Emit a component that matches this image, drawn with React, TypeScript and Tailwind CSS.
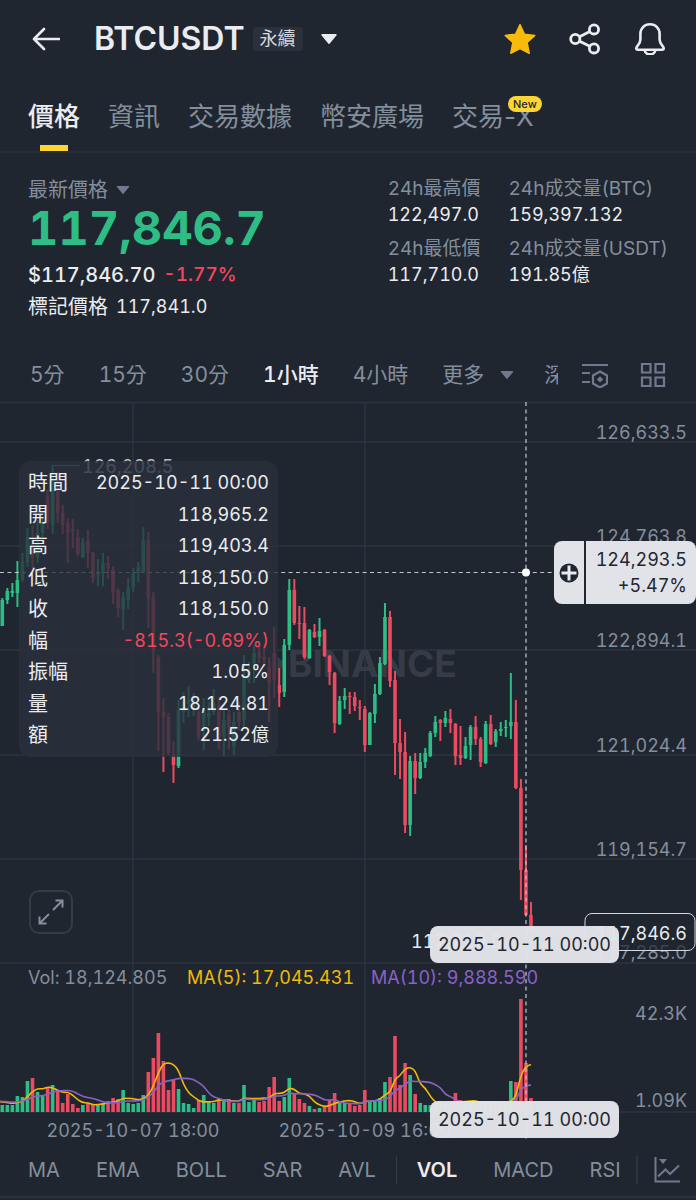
import { useState } from "react"

type Candle = [up: number, high: number, top: number, bottom: number, low: number, vol: number]

// [up, high, body top, body bottom, low, volume] in chart units
const CANDLES: Candle[] = [
  [1, 198, 200, 226, 226, 7], [1, 188, 191, 200, 204, 7], [1, 183, 191, 193, 197, 7],
  [1, 161, 180, 193, 207, 16], [1, 153, 162, 180, 182, 15], [1, 128, 137, 162, 167, 31],
  [0, 125, 138, 158, 168, 34], [1, 120, 133, 157, 163, 20], [1, 117, 123, 133, 137, 16],
  [0, 90, 97, 123, 129, 24], [1, 65, 90, 125, 134, 27], [0, 72, 90, 113, 123, 22],
  [0, 105, 113, 125, 134, 9], [0, 118, 123, 133, 163, 18], [0, 119, 129, 131, 148, 8],
  [0, 129, 137, 154, 156, 4], [1, 138, 142, 157, 158, 7], [0, 130, 141, 153, 168, 9],
  [0, 152, 153, 178, 183, 8], [1, 159, 172, 175, 186, 8], [1, 153, 163, 173, 186, 9],
  [0, 156, 163, 168, 179, 11], [0, 166, 170, 193, 204, 14], [0, 188, 190, 208, 217, 13],
  [1, 192, 197, 210, 230, 22], [1, 178, 187, 200, 209, 9], [1, 168, 173, 187, 192, 8],
  [1, 162, 167, 173, 182, 9], [1, 127, 140, 172, 173, 17], [0, 132, 140, 197, 228, 40],
  [0, 192, 197, 250, 273, 54], [0, 255, 258, 312, 351, 79], [0, 298, 312, 317, 372, 51],
  [0, 313, 317, 353, 355, 22], [0, 341, 355, 365, 383, 33], [1, 300, 310, 366, 368, 23],
  [1, 292, 302, 312, 323, 9], [1, 286, 300, 304, 317, 8], [1, 293, 300, 307, 316, 4],
  [0, 308, 313, 337, 340, 12], [1, 298, 310, 327, 350, 17], [1, 302, 313, 317, 326, 10],
  [1, 289, 303, 312, 315, 9], [0, 297, 305, 340, 349, 13], [1, 310, 320, 337, 356, 11],
  [0, 310, 315, 328, 349, 13], [1, 312, 322, 347, 355, 9], [0, 302, 312, 322, 330, 9],
  [1, 255, 277, 320, 328, 27], [1, 262, 270, 280, 283, 10], [1, 245, 253, 263, 283, 12],
  [0, 247, 252, 258, 263, 10], [0, 248, 257, 260, 267, 11], [0, 257, 267, 283, 322, 25],
  [0, 227, 253, 280, 298, 35], [0, 268, 285, 293, 307, 11], [1, 239, 245, 292, 297, 15],
  [1, 179, 190, 245, 250, 34], [0, 179, 190, 223, 225, 19], [0, 206, 223, 224, 239, 13],
  [0, 207, 223, 257, 259, 9], [1, 229, 230, 258, 259, 6], [0, 224, 232, 237, 238, 3],
  [1, 218, 231, 237, 246, 4], [0, 229, 230, 256, 257, 6], [0, 255, 256, 272, 285, 12],
  [0, 272, 273, 323, 333, 19], [1, 296, 301, 324, 325, 9], [1, 288, 296, 300, 309, 9],
  [0, 292, 296, 297, 314, 9], [0, 292, 297, 306, 311, 6], [0, 300, 307, 308, 320, 7],
  [0, 306, 309, 345, 352, 22], [1, 312, 313, 345, 345, 10], [1, 284, 294, 314, 323, 10],
  [1, 257, 263, 294, 295, 14], [1, 203, 217, 264, 265, 30], [0, 211, 217, 281, 287, 35],
  [0, 271, 280, 343, 375, 76], [0, 319, 343, 352, 379, 27], [0, 332, 352, 425, 433, 49],
  [1, 356, 361, 425, 436, 37], [0, 353, 361, 378, 394, 18], [1, 353, 362, 378, 379, 9],
  [1, 348, 353, 362, 368, 7], [1, 331, 333, 356, 357, 7], [1, 316, 322, 333, 337, 8],
  [0, 319, 320, 323, 341, 7], [1, 311, 318, 323, 327, 6], [0, 309, 319, 323, 333, 7],
  [0, 323, 324, 356, 365, 19], [0, 326, 355, 358, 365, 12], [1, 337, 346, 358, 359, 8],
  [1, 325, 327, 345, 360, 9], [0, 316, 327, 339, 345, 8], [0, 337, 339, 362, 367, 9],
  [1, 321, 324, 363, 364, 9], [0, 315, 324, 344, 345, 7], [1, 329, 331, 342, 347, 5],
  [1, 322, 329, 331, 336, 5], [1, 320, 327, 328, 337, 6], [1, 273, 322, 326, 339, 31],
  [0, 300, 322, 388, 389, 30], [0, 379, 388, 470, 500, 113], [0, 445, 470, 515, 516, 49],
  [0, 502, 515, 530, 532, 14],
]

const UP = "#2ebd85"
const DOWN = "#ec4a61"
const GRID = "#2d343f"
const VOL_BASE = 712
const xAt = (i: number) => 2.3 + i * 5.035

const PRICE_AXIS = [
  { y: 32, line: 42, label: "126,633.5" },
  { y: 136, line: 146, label: "124,763.8" },
  { y: 240, line: 250, label: "122,894.1" },
  { y: 345, line: 355, label: "121,024.4" },
  { y: 449, line: 459, label: "119,154.7" },
  { y: 552, line: 563, label: "117,285.0" },
]

const DETAILS = [
  ["時間", "2025-10-11 00:00"],
  ["開", "118,965.2"],
  ["高", "119,403.4"],
  ["低", "118,150.0"],
  ["收", "118,150.0"],
  ["幅", "-815.3(-0.69%)"],
  ["振幅", "1.05%"],
  ["量", "18,124.81"],
  ["額", "21.52億"],
]

const TABS = ["價格", "資訊", "交易數據", "幣安廣場", "交易-X"]
const INTERVALS = ["5分", "15分", "30分", "1小時", "4小時"]

function maPath(period: number) {
  const pts = CANDLES.map((_, i) => {
    let sum = 0
    for (let k = i - period + 1; k <= i; k++) sum += k < 0 ? 11 : CANDLES[k][5]
    return [xAt(i), VOL_BASE - sum / period]
  })
  let d = `M0 ${pts[0][1]}`
  for (let i = 0; i < pts.length - 1; i++) {
    const mx = (pts[i][0] + pts[i + 1][0]) / 2
    const my = (pts[i][1] + pts[i + 1][1]) / 2
    d += ` Q${pts[i][0]} ${pts[i][1]} ${mx} ${my}`
  }
  const last = pts[pts.length - 1]
  return `${d} L${last[0]} ${last[1]}`
}

function Caret({ className }: { className: string }) {
  return (
    <svg viewBox="0 0 16 10" className={className} fill="currentColor" aria-hidden="true">
      <path d="M1 0h14a.8.8 0 0 1 .6 1.3L8.8 9.5a1 1 0 0 1-1.6 0L.4 1.3A.8.8 0 0 1 1 0z" />
    </svg>
  )
}

function Header() {
  return (
    <header className="flex h-[78px] items-center pl-8 pr-[30px] text-[#eaecef]">
      <button aria-label="返回">
        <svg viewBox="0 0 28 24" className="h-6 w-7" fill="none" stroke="currentColor" strokeWidth="2.6" strokeLinecap="round" strokeLinejoin="round">
          <path d="M27 12H2M12 2 2 12l10 10" />
        </svg>
      </button>
      <h1 className="ml-[34px] text-[32px] font-semibold leading-9">BTCUSDT</h1>
      <span className="ml-2 rounded bg-[#2a313c] px-[7px] text-lg leading-6 text-[#d5d9df]">永續</span>
      <button className="ml-[18px]" aria-label="切換交易對">
        <Caret className="h-[10px] w-4" />
      </button>
      <div className="ml-auto flex items-center gap-[33px]">
        <button aria-label="收藏">
          <svg viewBox="0 0 32 32" className="size-8 text-[#f8bb0b]" fill="currentColor" stroke="currentColor" strokeWidth="1.4" strokeLinejoin="round">
            <path d="m16 1.5 4.4 9.6 10.4 1.3-7.6 7.2 2.1 10.7-9.3-4.7-9.3 4.7 2.1-10.7L1.2 12.4l10.4-1.3z" />
          </svg>
        </button>
        <button aria-label="分享">
          <svg viewBox="0 0 32 32" className="size-8" fill="none" stroke="currentColor" strokeWidth="2.8">
            <circle cx="6.3" cy="16" r="4.6" />
            <circle cx="25" cy="6.4" r="4.6" />
            <circle cx="25" cy="25.4" r="4.6" />
            <path d="m10.6 13.8 10.2-5.2M10.6 18.2l10.2 5.1" />
          </svg>
        </button>
        <button aria-label="通知">
          <svg viewBox="0 0 32 32" className="size-8" fill="none" stroke="currentColor" strokeWidth="2.6" strokeLinejoin="round">
            <path d="M16 1.3c-5.800 0-9.600 4.200-9.600 9.600v5.600c0 2.400-1 4.200-2.700 6.200-1.600 1.800-2.200 4 .2 4h24.200c2.400 0 1.800-2.200.2-4-1.700-2-2.700-3.800-2.700-6.200v-5.600c0-5.400-3.800-9.600-9.600-9.600z" />
            <path d="M10.600 27.200c.6 2.700 2.700 4.200 5.400 4.200s4.800-1.500 5.400-4.200" />
          </svg>
        </button>
      </div>
    </header>
  )
}

function Tabs() {
  const [active, setActive] = useState("價格")
  return (
    <nav className="flex h-[75px] items-stretch gap-7 border-b-2 border-[#272e39] pl-7 normal-nums">
      {TABS.map((t) => (
        <button
          key={t}
          onClick={() => setActive(t)}
          className={`relative whitespace-nowrap pt-1 text-[26px] leading-8 ${t === active ? "font-medium text-[#eaecef]" : "text-[#848e9c]"}`}
        >
          {t}
          {t === active && <span className="absolute bottom-0 left-1/2 h-[6px] w-7 -translate-x-1/2 bg-[#fcd535]" />}
          {t === "交易-X" && (
            <span className="absolute -right-2 top-[18px] rounded-full bg-[#fcd535] px-[5px] text-[11px] font-medium leading-4 text-[#1f2630]">
              New
            </span>
          )}
        </button>
      ))}
    </nav>
  )
}

function Stat({ label, value }: { label: string; value: string }) {
  return (
    <div>
      <dt className="whitespace-nowrap text-[19px] leading-[26px] text-[#848e9c]">{label}</dt>
      <dd className="text-lg leading-[26px]">{value}</dd>
    </div>
  )
}

function Summary() {
  return (
    <section className="flex justify-between pl-7 pr-7 pt-[23px] text-[#eaecef]">
      <div>
        <button className="flex items-center gap-2 text-xl leading-7 text-[#848e9c]">
          最新價格
          <Caret className="h-2 w-[14px] text-[#717a8c]" />
        </button>
        <p className="text-[47px] font-bold leading-[48px] text-[#2ebd85]">117,846.7</p>
        <p className="mt-[7px] flex gap-2 text-xl font-medium leading-8">
          $117,846.70 <span className="text-[19px] text-[#f6465d]">-1.77%</span>
        </p>
        <p className="flex gap-2 leading-8">
          <span className="text-xl leading-8">標記價格</span>
          <span className="text-lg leading-8">117,841.0</span>
        </p>
      </div>
      <dl className="grid grid-cols-[auto_auto] content-start gap-x-7 gap-y-2">
        <Stat label="24h最高價" value="122,497.0" />
        <Stat label="24h成交量(BTC)" value="159,397.132" />
        <Stat label="24h最低價" value="117,710.0" />
        <Stat label="24h成交量(USDT)" value="191.85億" />
      </dl>
    </section>
  )
}

function Intervals() {
  const [active, setActive] = useState("1小時")
  return (
    <div className="mt-[27px] flex h-[50px] items-center pl-[30px] pr-[30px] text-[#848e9c]">
      <div className="flex min-w-0 flex-1 items-center gap-[34px] overflow-hidden whitespace-nowrap text-[21px]">
        {INTERVALS.map((t) => (
          <button key={t} onClick={() => setActive(t)} className={t === active ? "font-medium text-[#eaecef]" : ""}>
            {t}
          </button>
        ))}
        <button className="flex items-center gap-4">
          更多
          <Caret className="h-2 w-[14px] text-[#717a8c]" />
        </button>
        <button className="-ml-1">深度圖</button>
      </div>
      <button className="ml-6" aria-label="指標設定">
        <svg viewBox="0 0 26 25" className="h-[25px] w-[26px] text-[#717a8c]" fill="none" stroke="currentColor" strokeWidth="2.200">
          <path d="M0 2h26M0 10h8M0 19h8" />
          <path d="m18 8.500 7 4v8l-7 4-7-4v-8z" />
          <path d="m18 13.200 3.200 3.200-3.200 3.200-3.200-3.200z" fill="currentColor" stroke="none" />
        </svg>
      </button>
      <button className="ml-8" aria-label="版面">
        <svg viewBox="0 0 26 26" className="size-[26px] text-[#717a8c]" fill="none" stroke="currentColor" strokeWidth="2.200">
          <path d="M2 2h8.500v8.500H2zM15.500 2H24v8.500h-8.500zM2 15.500h8.500V24H2zM15.500 15.500H24V24h-8.500z" />
        </svg>
      </button>
    </div>
  )
}

function Chart() {
  return (
    <svg viewBox="0 0 696 744" className="block h-auto w-full tabular-nums" fontSize="18" role="img" aria-label="BTCUSDT K線圖">
      <g stroke={GRID} strokeWidth="1.500">
        <path d="M0 2.500H696M0 712H696M133 2V712M365 2V712" />
        {PRICE_AXIS.map((p) => (
          <path key={p.line} d={`M0 ${p.line}H696`} />
        ))}
      </g>

      {/* watermark */}
      <g fill="#363c47">
        <path d="m277 256 8 8-8 8-8-8z" />
        <text x="288" y="277" fontSize="37" fontWeight="700">BINANCE</text>
      </g>

      {CANDLES.map(([up, high, top, bottom, low, vol], i) => (
        <g key={i} fill={up ? UP : DOWN}>
          <rect x={xAt(i) - 1} y={high} width="2" height={low - high} />
          <rect x={xAt(i) - 1.8} y={top} width="3.6" height={Math.max(bottom - top, 1)} />
          <rect x={xAt(i) - 1.8} y={VOL_BASE - vol} width="3.6" height={vol} />
        </g>
      ))}
      <g fill="none" strokeWidth="1.600">
        <path d={maPath(5)} stroke="#f0b90b" />
        <path d={maPath(10)} stroke="#8a62c4" />
      </g>

      {/* extremes */}
      <path d="M53 65.500H80" stroke="#848e9c" />
      <text x="82" y="73" fill="#b7bdc6">126,208.5</text>
      <text x="411" y="548" fill="#eaecef">117,710.0</text>

      <g fill="#848e9c" textAnchor="end">
        {PRICE_AXIS.map((p) => (
          <text key={p.label} x="687" y={p.y + 7}>{p.label}</text>
        ))}
        <text x="687" y="620">42.3K</text>
        <text x="687" y="707">1.09K</text>
      </g>

      <path d="M531 531H585" stroke="#848e9c" strokeDasharray="1 3" />
      <rect x="585" y="513.500" width="110" height="37" rx="7" fill="#1f2630" fillOpacity="0.7" stroke="#d5d9df" />
      <text x="687" y="540" fill="#eaecef" textAnchor="end">117,846.6</text>

      <g>
        <text x="28" y="584" fill="#848e9c">Vol: 18,124.805</text>
        <text x="187" y="584" fill="#f0b90b">MA(5): 17,045.431</text>
        <text x="371" y="584" fill="#8a62c4">MA(10): 9,888.590</text>
      </g>

      <g fill="#848e9c" textAnchor="middle">
        <text x="133" y="737">2025-10-07 18:00</text>
        <text x="365" y="737">2025-10-09 16:00</text>
      </g>

      {/* crosshair */}
      <g stroke="#c3c8d0" strokeWidth="1.200" strokeDasharray="4 3.400">
        <path d="M526 2V742" />
        <path d="M0 172.500H554" />
      </g>
      <circle cx="526" cy="172.500" r="4" fill="#fff" />
    </svg>
  )
}

function DetailPanel() {
  return (
    <dl className="absolute left-[19px] top-[61px] flex h-[296px] w-[259px] flex-col justify-between rounded-xl bg-[#29313d]/80 px-[9px] py-2 text-[#eaecef]">
      {DETAILS.map(([name, value]) => (
        <div key={name} className="flex items-center justify-between">
          <dt className="text-xl leading-7">{name}</dt>
          <dd className={`text-lg leading-7 ${value.startsWith("-") ? "text-[#f6465d]" : ""}`}>{value}</dd>
        </div>
      ))}
    </dl>
  )
}

function ChartArea() {
  return (
    <section className="relative">
      <Chart />
      <DetailPanel />

      <div className="absolute right-0 top-[141px] flex h-[63px] items-stretch overflow-hidden rounded-lg bg-[#e1e3e8] text-right text-lg leading-[26px] text-[#1f2630]">
        <button className="flex w-8 items-center justify-center border-r-2 border-[#1f2630]" aria-label="新增提醒">
          <svg viewBox="0 0 20 20" className="size-5">
            <circle cx="10" cy="10" r="9.500" fill="#1f2630" />
            <path d="M10 2.500v15M2.500 10h15" stroke="#e8eaee" strokeWidth="3" />
          </svg>
        </button>
        <p className="py-[6px] pl-[10px] pr-[9px] leading-[26px]">
          124,293.5
          <br />
          +5.47%
        </p>
      </div>

      <button className="absolute left-[29px] top-[490px] flex size-11 items-center justify-center rounded-[10px] border-2 border-[#333b47] bg-[#1f2630] text-[#848e9c]" aria-label="全螢幕">
        <svg viewBox="0 0 26 26" className="size-[26px]" fill="none" stroke="currentColor" strokeWidth="2">
          <path d="M15 11 24.500 1.500M17.500 1.500h7v7M11 15l-9.500 9.500M1.500 17.500v7h7" />
        </svg>
      </button>

      <time className="absolute right-[77px] top-[526px] rounded-lg bg-[#e1e3e8]/98 px-2 text-lg leading-[37px] text-[#1f2630]">
        <span className="leading-[37px]">2025-10-11 00:00</span>
      </time>
      <time className="absolute right-[77px] top-[701px] rounded-lg bg-[#e1e3e8]/98 px-2 text-lg leading-[37px] text-[#1f2630]">
        <span className="leading-[37px]">2025-10-11 00:00</span>
      </time>
    </section>
  )
}

function Indicators() {
  return (
    <footer className="flex h-[54px] items-center border-b-2 border-[#2b323d] pl-7 pr-4 text-xl text-[#848e9c]">
      <div className="flex min-w-0 flex-1 items-center gap-9 overflow-hidden">
        <button>MA</button>
        <button>EMA</button>
        <button>BOLL</button>
        <button>SAR</button>
        <div className="flex items-center gap-5">
          <button>AVL</button>
          <span className="h-7 w-px bg-[#333b47]" />
          <button className="font-semibold text-[#eaecef]">VOL</button>
        </div>
        <button>MACD</button>
        <button>RSI</button>
      </div>
      <button className="flex h-7 items-center border-l-2 border-[#2d343f] pl-4" aria-label="圖表設定">
        <svg viewBox="0 0 26 26" className="size-[26px] text-[#717a8c]" fill="none" stroke="currentColor" strokeWidth="2">
          <path d="M1.500 0v24.500H26" />
          <path d="m4 19.500 7.500-7 4.500 4.500 9-8.500" />
          <path d="M5 2h8l-4 5z" fill="currentColor" stroke="none" />
        </svg>
      </button>
    </footer>
  )
}

export default function App() {
  return (
    <main className="min-h-screen bg-[#1f2630] font-['Inter','Noto_Sans_CJK_TC',sans-serif] tabular-nums">
      <Header />
      <Tabs />
      <Summary />
      <Intervals />
      <ChartArea />
      <Indicators />
    </main>
  )
}
